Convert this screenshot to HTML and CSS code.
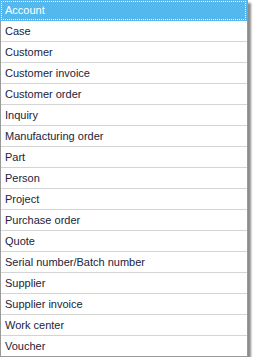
FILE: index.html
```html
<!DOCTYPE html>
<html lang="en">
<head>
<meta charset="UTF-8" />
<meta name="viewport" content="width=device-width, initial-scale=1" />
<title>Object type</title>
<link rel="stylesheet" href="styles.css">
</head>
<body>

<ul class="dropdown">
  <li class="item selected">Account</li>
  <li class="item">Case</li>
  <li class="item">Customer</li>
  <li class="item">Customer invoice</li>
  <li class="item">Customer order</li>
  <li class="item">Inquiry</li>
  <li class="item">Manufacturing order</li>
  <li class="item">Part</li>
  <li class="item">Person</li>
  <li class="item">Project</li>
  <li class="item">Purchase order</li>
  <li class="item">Quote</li>
  <li class="item">Serial number/Batch number</li>
  <li class="item">Supplier</li>
  <li class="item">Supplier invoice</li>
  <li class="item">Work center</li>
  <li class="item">Voucher</li>
</ul>

</body>
</html>
```

FILE: styles.css
```css
body {
  margin: 0;
  background: #ffffff;
  font-family: "Liberation Sans", Arial, sans-serif;
}
.dropdown {
  list-style: none;
  margin: 0;
  padding: 0;
  width: 246px;
  background: #ffffff;
  border: 1px solid #9a9a9a;
  border-top: none;
  box-shadow: 3px 3px 2px rgba(0, 0, 0, 0.45);
}
.item {
  height: 20px;
  line-height: 20px;
  padding-left: 4px;
  font-size: 11px;
  color: #22223a;
  border-bottom: 1px solid #d4d4d4;
  white-space: nowrap;
}
.item:last-child {
  border-bottom: none;
}
.selected {
  background: #52b8ee;
  color: #ffffff;
  margin-left: -1px;
  padding-left: 5px;
  outline: 1px dotted #ffffff;
  outline-offset: -2px;
  border-bottom-color: #52b8ee;
}
```
